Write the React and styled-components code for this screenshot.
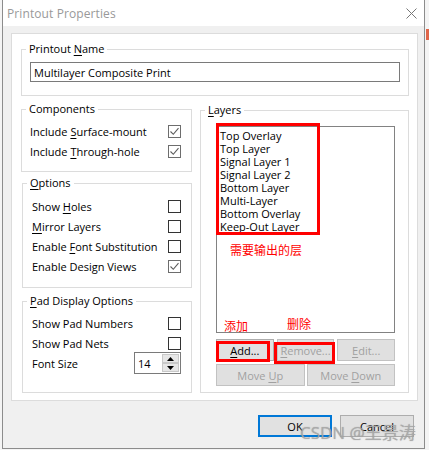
import React from "react";
import styled, { createGlobalStyle, css } from "styled-components";

const Global = createGlobalStyle`
  html, body { margin: 0; padding: 0; background: #f7f7f7; }
  body { font-family: "Open Sans", "Noto Sans", sans-serif; font-size: 11px; color: #000; }
  * { box-sizing: border-box; }
`;

const Screen = styled.div`
  position: relative;
  width: 429px;
  height: 450px;
  overflow: hidden;
  padding-left: 2px;
  background: #f4f4f4;
`;

const EdgeMark = styled.div`
  position: absolute;
  right: 0;
  top: 29px;
  width: 3px;
  height: 11px;
  background: #e0664a;
`;

const Dialog = styled.div`
  width: 423px;
  height: 449px;
  border: 1px solid #8c8c8c;
  border-top: none;
  background: #f0f0f0;
  display: flex;
  flex-direction: column;
`;

const TitleBar = styled.div`
  height: 26px;
  flex: none;
  background: #fff;
  display: flex;
  align-items: center;
  justify-content: space-between;
  padding: 0 7px 0 4px;
`;

const Title = styled.span`
  font-size: 12px;
  color: #999;
  letter-spacing: 0.1px;
`;

const Body = styled.div`
  flex: 1;
  display: flex;
  flex-direction: column;
  padding: 7px 6px 0 8px;
`;

const Panel = styled.div`
  height: 368px;
  background: #fff;
  border: 1px solid #dcdcdc;
  padding: 15px 8px 0 9px;
  display: flex;
  flex-direction: column;
`;

const Group = styled.div`
  position: relative;
  border: 1px solid #dcdcdc;
  background: #fff;
  ${(p) => p.$h && css`height: ${p.$h}px;`}
  margin-top: ${(p) => p.$mt || 0}px;
  margin-left: ${(p) => p.$ml || 0}px;
  padding: ${(p) => p.$pad || "0"};
`;

const GroupTitle = styled.span`
  position: absolute;
  top: -8px;
  left: 4px;
  padding: 0 3px;
  background: #fff;
  line-height: 14px;
  font-size: 11px;
  white-space: nowrap;
`;

const Mn = styled.span`
  text-decoration: underline;
  text-underline-offset: 2px;
`;

const TextInput = styled.div`
  height: 20px;
  border: 1px solid #7a7a7a;
  display: flex;
  align-items: center;
  padding-left: 3px;
`;

const Columns = styled.div`
  display: grid;
  grid-template-columns: 171px 209px;
  column-gap: 8px;
  margin-top: 13px;
  align-items: start;
`;

const LeftCol = styled.div`
  display: flex;
  flex-direction: column;
`;

const Row = styled.div`
  height: 20px;
  display: flex;
  align-items: center;
  justify-content: space-between;
  white-space: nowrap;
`;

const Box = styled.span`
  width: 13px;
  height: 13px;
  flex: none;
  border: 1px solid ${(p) => (p.$checked ? "#6d6d6d" : "#333")};
  background: #fff;
  display: flex;
  align-items: center;
  justify-content: center;
`;

const Check = ({ checked }) => (
  <Box $checked={checked}>
    {checked && (
      <svg width="11" height="11" viewBox="0 0 11 11">
        <polyline points="1.5,5.5 4.3,8.3 9.5,2.2" fill="none" stroke="#5c5c5c" strokeWidth="1.1" />
      </svg>
    )}
  </Box>
);

const Spin = styled.div`
  width: 47px;
  height: 22px;
  border: 1px solid #7a7a7a;
  display: flex;
  align-items: center;
  justify-content: space-between;
  padding: 1px 1px 1px 3px;
`;

const SpinBtns = styled.div`
  width: 17px;
  height: 100%;
  display: flex;
  flex-direction: column;
`;

const SpinBtn = styled.div`
  flex: 1;
  background: #e6e6e6;
  border: 1px solid #c8c8c8;
  display: flex;
  align-items: center;
  justify-content: center;
`;

const Tri = ({ up }) => (
  <svg width="7" height="4" viewBox="0 0 7 4">
    <polygon points={up ? "0,4 7,4 3.5,0" : "0,0 7,0 3.5,4"} fill="#000" />
  </svg>
);

const ListBox = styled.div`
  height: 207px;
  border: 1px solid #828282;
  padding: 2px 3px;
  display: flex;
  flex-direction: column;
`;

const ListItem = styled.div`
  line-height: 13px;
  white-space: nowrap;
`;

const BtnGrid = styled.div`
  display: grid;
  grid-template-columns: repeat(${(p) => p.$cols}, 1fr);
  column-gap: ${(p) => p.$gap}px;
  margin-top: ${(p) => p.$mt}px;
`;

const Button = styled.div`
  height: 22px;
  display: flex;
  align-items: center;
  justify-content: center;
  background: ${(p) => (p.$disabled ? "#e0e0e0" : "#e1e1e1")};
  border: 1px solid ${(p) => (p.$disabled ? "#c2c2c2" : "#adadad")};
  color: ${(p) => (p.$disabled ? "#a0a0a0" : "#000")};
  white-space: nowrap;
  ${(p) => p.$default && css`border: 2px solid #0078d7;`}
  ${(p) => p.$w && css`width: ${p.$w}px;`}
`;

const Footer = styled.div`
  display: flex;
  justify-content: flex-end;
  gap: 8px;
  padding-right: 4px;
  margin-top: 14px;
`;

const RedBox = styled.div`
  position: absolute;
  border: 3px solid #f00;
  left: ${(p) => p.$x}px;
  top: ${(p) => p.$y}px;
  width: ${(p) => p.$w}px;
  height: ${(p) => p.$h}px;
`;

const RedNote = styled.span`
  position: absolute;
  left: ${(p) => p.$x}px;
  top: ${(p) => p.$y}px;
  color: #f00;
  font-family: "Noto Sans CJK SC", sans-serif;
  font-size: 12px;
  line-height: 16px;
  white-space: nowrap;
`;

const Watermark = styled.span`
  position: absolute;
  left: 300px;
  top: 422px;
  font-family: "Open Sans", "Noto Sans CJK SC", sans-serif;
  font-size: 17px;
  line-height: 22px;
  color: rgba(170, 170, 170, 0.85);
  text-shadow: 0 0 1px rgba(120, 120, 120, 0.6);
  white-space: nowrap;
  pointer-events: none;
`;

const CloseIcon = () => (
  <svg width="11" height="11" viewBox="0 0 11 11">
    <path d="M0.5 0.5 L10.5 10.5 M10.5 0.5 L0.5 10.5" stroke="#777" strokeWidth="1" fill="none" />
  </svg>
);

const layers = [
  "Top Overlay",
  "Top Layer",
  "Signal Layer 1",
  "Signal Layer 2",
  "Bottom Layer",
  "Multi-Layer",
  "Bottom Overlay",
  "Keep-Out Layer",
];

export default function App() {
  return (
    <>
      <Global />
      <Screen>
        <EdgeMark />
        <Dialog>
          <TitleBar>
            <Title>Printout Properties</Title>
            <CloseIcon />
          </TitleBar>
          <Body>
            <Panel>
              <Group $pad="12px 8px 13px 8px">
                <GroupTitle>
                  Printout <Mn>N</Mn>ame
                </GroupTitle>
                <TextInput>Multilayer Composite Print</TextInput>
              </Group>
              <Columns>
                <LeftCol>
                  <Group $h={63} $pad="11px 10px 0 8px">
                    <GroupTitle>Components</GroupTitle>
                    <Row>
                      <span>
                        Include <Mn>S</Mn>urface-mount
                      </span>
                      <Check checked />
                    </Row>
                    <Row>
                      <span>
                        Include <Mn>T</Mn>hrough-hole
                      </span>
                      <Check checked />
                    </Row>
                  </Group>
                  <Group $h={105} $mt={11} $ml={1} $pad="12px 10px 0 9px">
                    <GroupTitle>
                      <Mn>O</Mn>ptions
                    </GroupTitle>
                    <Row>
                      <span>
                        Show <Mn>H</Mn>oles
                      </span>
                      <Check />
                    </Row>
                    <Row>
                      <span>
                        <Mn>M</Mn>irror Layers
                      </span>
                      <Check />
                    </Row>
                    <Row>
                      <span>
                        Enable <Mn>F</Mn>ont Substitution
                      </span>
                      <Check />
                    </Row>
                    <Row>
                      <span>Enable Design Views</span>
                      <Check checked />
                    </Row>
                  </Group>
                  <Group $h={92} $mt={13} $ml={1} $pad="11px 10px 0 9px">
                    <GroupTitle>
                      <Mn>P</Mn>ad Display Options
                    </GroupTitle>
                    <Row>
                      <span>Show Pad Numbers</span>
                      <Check />
                    </Row>
                    <Row>
                      <span>Show Pad Nets</span>
                      <Check />
                    </Row>
                    <Row>
                      <span>Font Size</span>
                      <Spin>
                        <span>14</span>
                        <SpinBtns>
                          <SpinBtn>
                            <Tri up />
                          </SpinBtn>
                          <SpinBtn>
                            <Tri />
                          </SpinBtn>
                        </SpinBtns>
                      </Spin>
                    </Row>
                  </Group>
                </LeftCol>
                <Group $h={283} $mt={1} $pad="15px 13px 0 15px">
                  <GroupTitle>
                    <Mn>L</Mn>ayers
                  </GroupTitle>
                  <ListBox>
                    {layers.map((l) => (
                      <ListItem key={l}>{l}</ListItem>
                    ))}
                  </ListBox>
                  <BtnGrid $cols={3} $gap={3} $mt={6}>
                    <Button>
                      <span>
                        <Mn>A</Mn>dd...
                      </span>
                    </Button>
                    <Button $disabled>
                      <span>
                        <Mn>R</Mn>emove...
                      </span>
                    </Button>
                    <Button $disabled>
                      <span>
                        <Mn>E</Mn>dit...
                      </span>
                    </Button>
                  </BtnGrid>
                  <BtnGrid $cols={2} $gap={2} $mt={3}>
                    <Button $disabled>
                      <span>
                        Move <Mn>U</Mn>p
                      </span>
                    </Button>
                    <Button $disabled>
                      <span>
                        Move <Mn>D</Mn>own
                      </span>
                    </Button>
                  </BtnGrid>
                  <RedBox $x={15} $y={12} $w={104} $h={112} />
                  <RedNote $x={29} $y={131}>需要输出的层</RedNote>
                  <RedNote $x={23} $y={207}>添加</RedNote>
                  <RedNote $x={86} $y={205}>删除</RedNote>
                  <RedBox $x={15} $y={230} $w={54} $h={21} />
                  <RedBox $x={73} $y={231} $w={61} $h={22} />
                </Group>
              </Columns>
            </Panel>
            <Footer>
              <Button $default $w={74}>
                <span>OK</span>
              </Button>
              <Button $w={74}>
                <span>Cancel</span>
              </Button>
            </Footer>
          </Body>
        </Dialog>
        <Watermark>CSDN @王景涛</Watermark>
      </Screen>
    </>
  );
}
